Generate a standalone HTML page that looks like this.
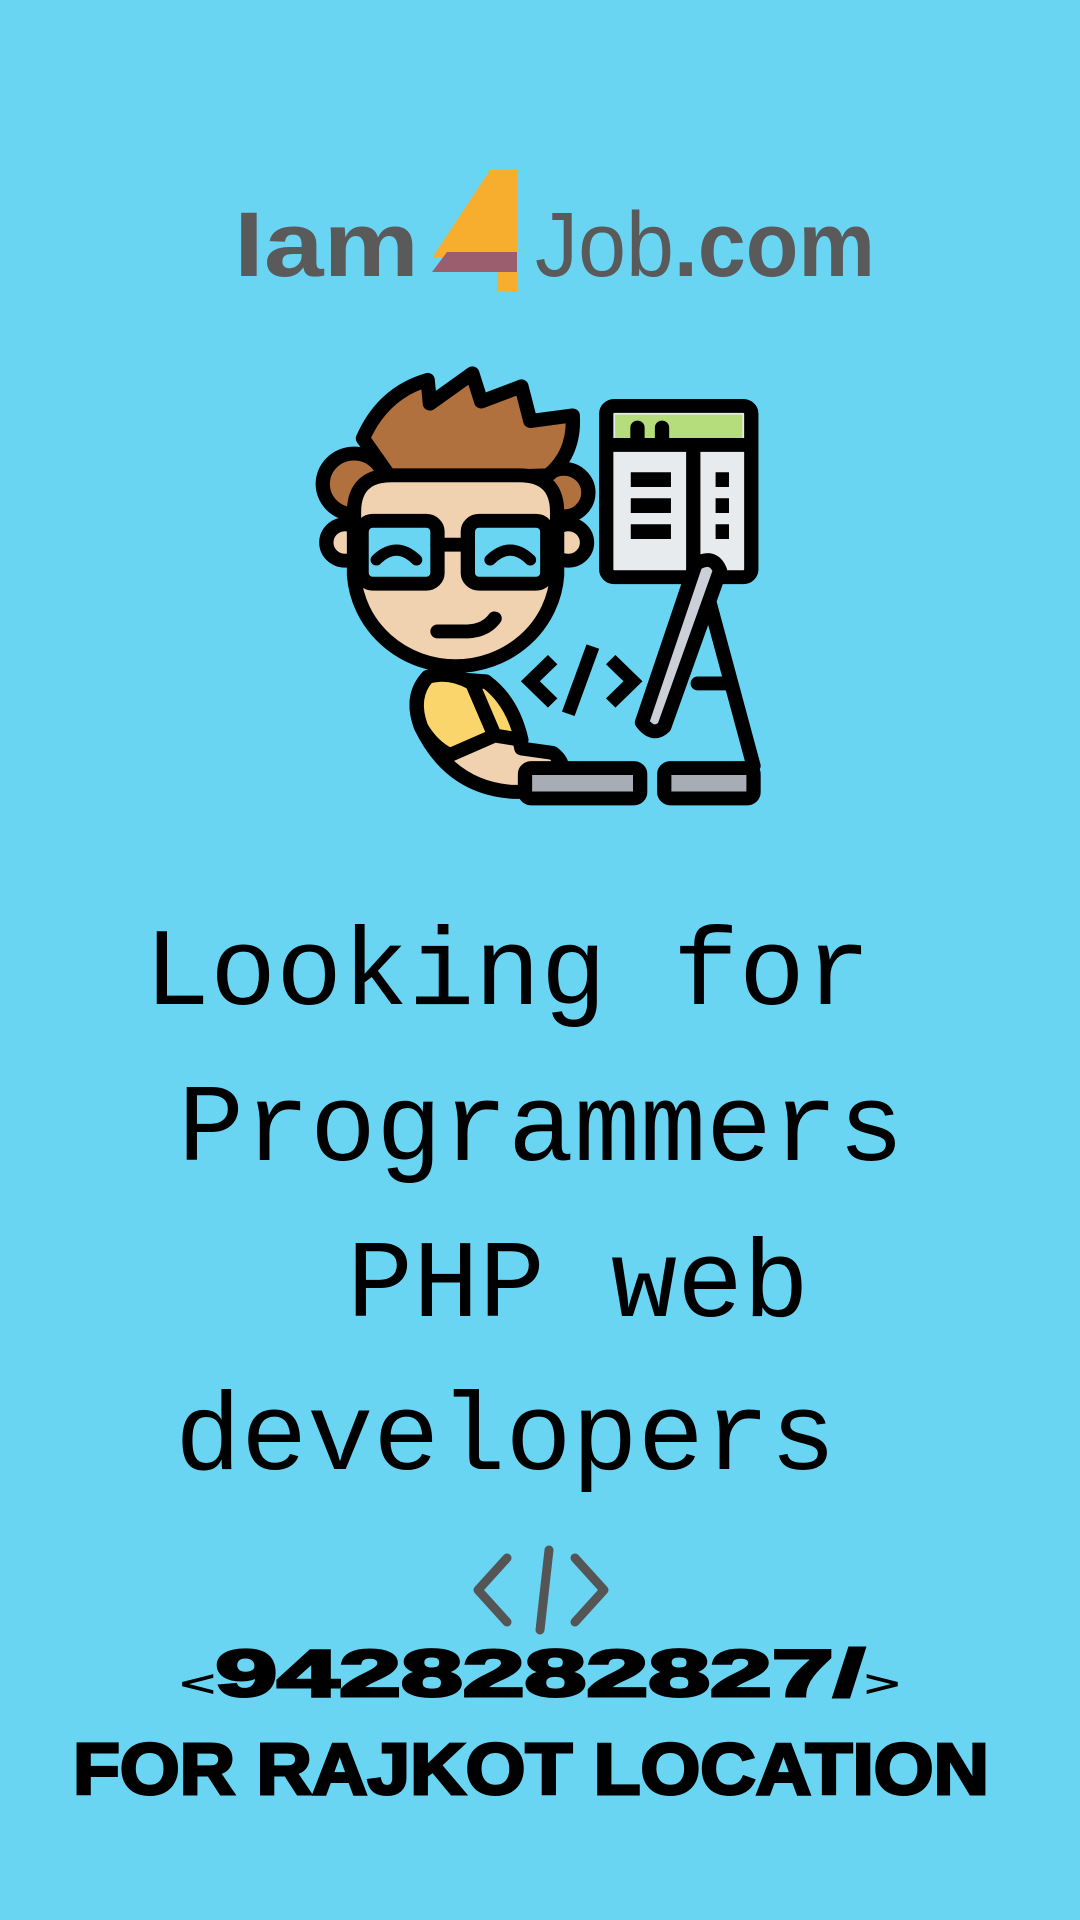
<!DOCTYPE html>
<html><head><meta charset="utf-8"><style>
html,body{margin:0;padding:0;background:#6AD5F3;}
svg{display:block}
</style></head><body>
<svg width="1080" height="1920" viewBox="0 0 1080 1920" xmlns="http://www.w3.org/2000/svg">
<rect width="1080" height="1920" fill="#6AD5F3"/>
<!-- logo -->
<text x="234" y="276" font-family="Liberation Sans, sans-serif" font-weight="bold" font-size="92" fill="#5a5a5a" textLength="185" lengthAdjust="spacingAndGlyphs">Iam</text>
<polygon points="490,170 517,170 517,291 497,291 497,258 432,258" fill="#F7AE2E"/>
<polygon points="447,252 517,252 517,272 432,272" fill="#9B5E6E"/>
<text x="535" y="276" font-family="Liberation Sans, sans-serif" font-size="92" fill="#5a5a5a" textLength="340" lengthAdjust="spacingAndGlyphs">Job<tspan font-weight="bold">.com</tspan></text>

<!-- illustration -->
<g transform="translate(200 150) scale(0.4464 0.4337)" stroke="#000" stroke-width="32" stroke-linejoin="round" stroke-linecap="round">
  <path d="M1130,1000 L1240,1420 M1115,1230 L1180,1230" fill="none"/>
  <circle cx="345" cy="770" r="70" fill="#B0713F"/>
  <circle cx="815" cy="790" r="55" fill="#B0713F"/>
  <path d="M365,665 Q410,560 510,530 L515,585 L610,515 L630,580 L720,545 L740,625 L835,612 Q840,700 780,750 L430,760 Z" fill="#B0713F"/>
  <circle cx="325" cy="905" r="42" fill="#F0D1B0"/>
  <circle cx="825" cy="905" r="42" fill="#F0D1B0"/>
  <path d="M345,835 Q345,750 430,750 L715,750 Q800,750 800,835 L800,980 A228,225 0 0 1 345,980 Z" fill="#F0D1B0"/>
  <rect x="362" y="855" width="170" height="145" rx="25" fill="#6AD5F3"/>
  <rect x="600" y="855" width="178" height="145" rx="25" fill="#6AD5F3"/>
  <path d="M532,910 L600,910" fill="none"/>
  <path d="M395,945 Q440,900 485,945 M650,945 Q695,900 740,945" fill="none" stroke-width="26"/>
  <path d="M532,1110 L600,1110 Q640,1108 660,1080" fill="none"/>
  <path d="M510,1215 Q470,1260 495,1330 Q560,1470 700,1480 L800,1480 Q830,1420 790,1390 L720,1380 Q700,1280 640,1225 Z" fill="#F0D1B0"/>
  <path d="M510,1215 Q470,1260 495,1330 Q520,1375 560,1395 L660,1350 L610,1230 Q560,1200 510,1215 Z" fill="#F9D56B"/>
  <path d="M610,1230 L660,1350 L720,1360 Q700,1270 640,1225 Z" fill="#F9D56B"/>
  <rect x="910" y="590" width="325" height="395" rx="18" fill="#E8EBEE"/>
  <rect x="930" y="610" width="285" height="58" fill="#B5DD7C" stroke="none"/>
  <path d="M924,680 L1222,680 M1105,680 L1105,975 M980,668 L980,640 M1035,668 L1035,640" fill="none"/>
  <path d="M965,760 L1055,760 M965,820 L1055,820 M965,880 L1055,880" fill="none" stroke-width="34" stroke-linecap="butt"/>
  <path d="M1155,760 L1185,760 M1155,820 L1185,820 M1155,880 L1185,880" fill="none" stroke-width="34" stroke-linecap="butt"/>
  <path d="M1110,955 Q1150,930 1165,970 L1040,1330 Q1015,1355 990,1320 Z" fill="#CBD0D8"/>
  <rect x="728" y="1425" width="258" height="70" rx="14" fill="#A8ADB5"/>
  <rect x="1040" y="1425" width="200" height="70" rx="14" fill="#A8ADB5"/>
  <path d="M790,1175 L740,1225 L790,1275 M920,1175 L970,1225 L920,1275 M880,1145 L825,1300" fill="none" stroke-width="30" stroke-linecap="butt" stroke-linejoin="miter"/>
</g>

<!-- headline -->
<g font-family="Liberation Mono, monospace" font-size="110" fill="#000">
<text x="144" y="1004" textLength="727" lengthAdjust="spacingAndGlyphs">Looking for</text>
<text x="178" y="1160" textLength="726" lengthAdjust="spacingAndGlyphs">Programmers</text>
<text x="347" y="1316" textLength="462" lengthAdjust="spacingAndGlyphs">PHP web</text>
<text x="175" y="1469" textLength="661" lengthAdjust="spacingAndGlyphs">developers</text>
</g>

<!-- code icon -->
<path d="M507,1558 L478,1590 L507,1622 M575,1558 L604,1590 L575,1622 M549,1550 L540,1630" fill="none" stroke="#555" stroke-width="9" stroke-linecap="round" stroke-linejoin="round"/>

<!-- phone -->
<text x="180" y="1696" font-family="Liberation Sans, sans-serif" font-weight="bold" font-size="66" fill="#000" textLength="720" lengthAdjust="spacingAndGlyphs" stroke="#000" stroke-width="3"><tspan font-size="36" font-weight="normal" stroke-width="1">&lt;</tspan>9428282827/<tspan font-size="36" font-weight="normal" stroke-width="1">&gt;</tspan></text>
<text x="73" y="1794" font-family="Liberation Sans, sans-serif" font-weight="bold" font-size="72" fill="#000" stroke="#000" stroke-width="3" textLength="916" lengthAdjust="spacingAndGlyphs">FOR RAJKOT LOCATION</text>
</svg>
</body></html>
